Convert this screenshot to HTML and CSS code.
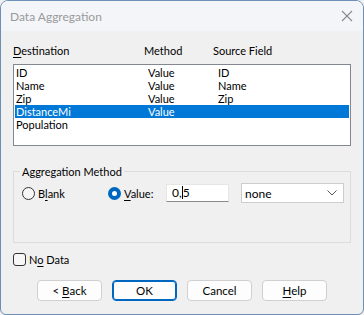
FILE: index.html
```html
<!DOCTYPE html>
<html lang="en">
<head>
    <meta charset="UTF-8">
    <title>Data Aggregation</title>
    <link rel="stylesheet" href="styles.css">
</head>
<body>
    <div class="window">
        <div class="title_bar">
            <span class="title">Data Aggregation</span>
            <svg class="close" width="12" height="12" viewBox="0 0 12 12">
                <path d="M1 1 L11 11 M11 1 L1 11" stroke="#8a8a8a" stroke-width="1.1" fill="none"/>
            </svg>
        </div>
        <div class="content">
            <div class="col_head">
                <span class="c1"><u>D</u>estination</span>
                <span class="c2">Method</span>
                <span class="c3">Source Field</span>
            </div>
            <ul class="list">
                <li><span>ID</span><span>Value</span><span>ID</span></li>
                <li><span>Name</span><span>Value</span><span>Name</span></li>
                <li><span>Zip</span><span>Value</span><span>Zip</span></li>
                <li class="selected"><span>DistanceMi</span><span>Value</span><span></span></li>
                <li><span>Population</span><span></span><span></span></li>
            </ul>
            <fieldset class="group">
                <legend>Aggregation Method</legend>
                <div class="method_row">
                    <label class="radio"><span class="dot"></span><span>B<u>l</u>ank</span></label>
                    <label class="radio on"><span class="dot"></span><span><u>V</u>alue:</span></label>
                    <div class="text_box">0,<span class="caret"></span>5</div>
                    <div class="combo">
                        <span>none</span>
                        <svg width="10" height="6" viewBox="0 0 10 6">
                            <path d="M0.5 0.5 L5 5 L9.5 0.5" stroke="#555" stroke-width="1" fill="none"/>
                        </svg>
                    </div>
                </div>
            </fieldset>
            <label class="check"><span class="box"></span><span>N<u>o</u> Data</span></label>
            <div class="buttons">
                <button>&lt; <u>B</u>ack</button>
                <button class="default">OK</button>
                <button>Cancel</button>
                <button><u>H</u>elp</button>
            </div>
        </div>
    </div>
</body>
</html>
```

FILE: styles.css
```css
*{
    margin:0;
    padding:0;
    box-sizing: border-box;
}
body{
    font-family: Lato, "Noto Sans", sans-serif;
    font-size: 11px;
    color: #000;
    background: #f0f0f0;
}
u{
    text-decoration-thickness: 1px;
    text-underline-offset: 2px;
}
.window{
    width: 364px;
    height: 315px;
    border: 1px solid #6d8fb5;
    border-radius: 8px 8px 6px 6px;
    background: #f0f0f0;
    overflow: hidden;
}
.title_bar{
    height: 30px;
    background: #f3f5f8;
    display: flex;
    align-items: center;
    justify-content: space-between;
    padding: 0 10px 0 9px;
}
.title{
    color: #9a9a9a;
    font-size: 12px;
}
.content{
    padding: 0 12px;
}
.col_head{
    display: flex;
    margin-top: 12px;
    height: 15px;
    line-height: 15px;
}
.col_head .c1{ width: 131px; }
.col_head .c2{ width: 69px; }
.list{
    list-style-type: none;
    margin-top: 6px;
    height: 82px;
    border: 1px solid #828790;
    background: #fff;
    padding: 1px 1px;
}
.list li{
    display: grid;
    grid-template-columns: 132px 70px 1fr;
    height: 13px;
    line-height: 13px;
    padding-left: 1px;
}
.list li.selected{
    background: #0078d7;
    color: #fff;
}
.group{
    margin-top: 18px;
    height: 79px;
    border: 1px solid #dcdcdc;
    padding: 0 6px;
}
.group legend{
    padding: 0 2px;
    line-height: 15px;
}
.method_row{
    display: flex;
    align-items: center;
    margin-top: 4px;
    height: 20px;
}
.radio{
    display: flex;
    align-items: center;
    width: 84px;
    margin-left: 2px;
}
.radio .dot{
    width: 13px;
    height: 13px;
    border: 1px solid #333;
    border-radius: 50%;
    margin-right: 3px;
    background: #f7f7f7;
}
.radio.on{
    width: 58px;
}
.radio.on .dot{
    border: 4px solid #0067c0;
    background: #fff;
}
.text_box{
    width: 63px;
    height: 18px;
    background: #fff;
    border: 1px solid #e6e6e6;
    border-bottom-color: #8a8a8a;
    padding-left: 5px;
    line-height: 16px;
    font-size: 12px;
}
.caret{
    display: inline-block;
    width: 1px;
    height: 13px;
    background: #000;
    vertical-align: -2px;
}
.combo{
    margin-left: 12px;
    width: 103px;
    height: 20px;
    background: #fff;
    border: 1px solid #cdcdcd;
    display: flex;
    align-items: center;
    justify-content: space-between;
    padding: 0 6px 0 3px;
    font-size: 12px;
}
.check{
    display: flex;
    align-items: center;
    margin-top: 9px;
    height: 15px;
}
.check .box{
    width: 13px;
    height: 13px;
    border: 1px solid #333;
    border-radius: 3px;
    background: #f7f7f7;
    margin-right: 3px;
}
.buttons{
    display: flex;
    gap: 10px;
    margin-top: 13px;
    padding-left: 24px;
}
.buttons button{
    width: 65px;
    height: 21px;
    background: #fdfdfd;
    border: 1px solid #d0d0d0;
    border-radius: 4px;
    font-family: inherit;
    font-size: 11.5px;
    color: #000;
}
.buttons button.default{
    border: 1px solid #0067c0;
    box-shadow: inset 0 0 0 1px #0067c0;
}
```
